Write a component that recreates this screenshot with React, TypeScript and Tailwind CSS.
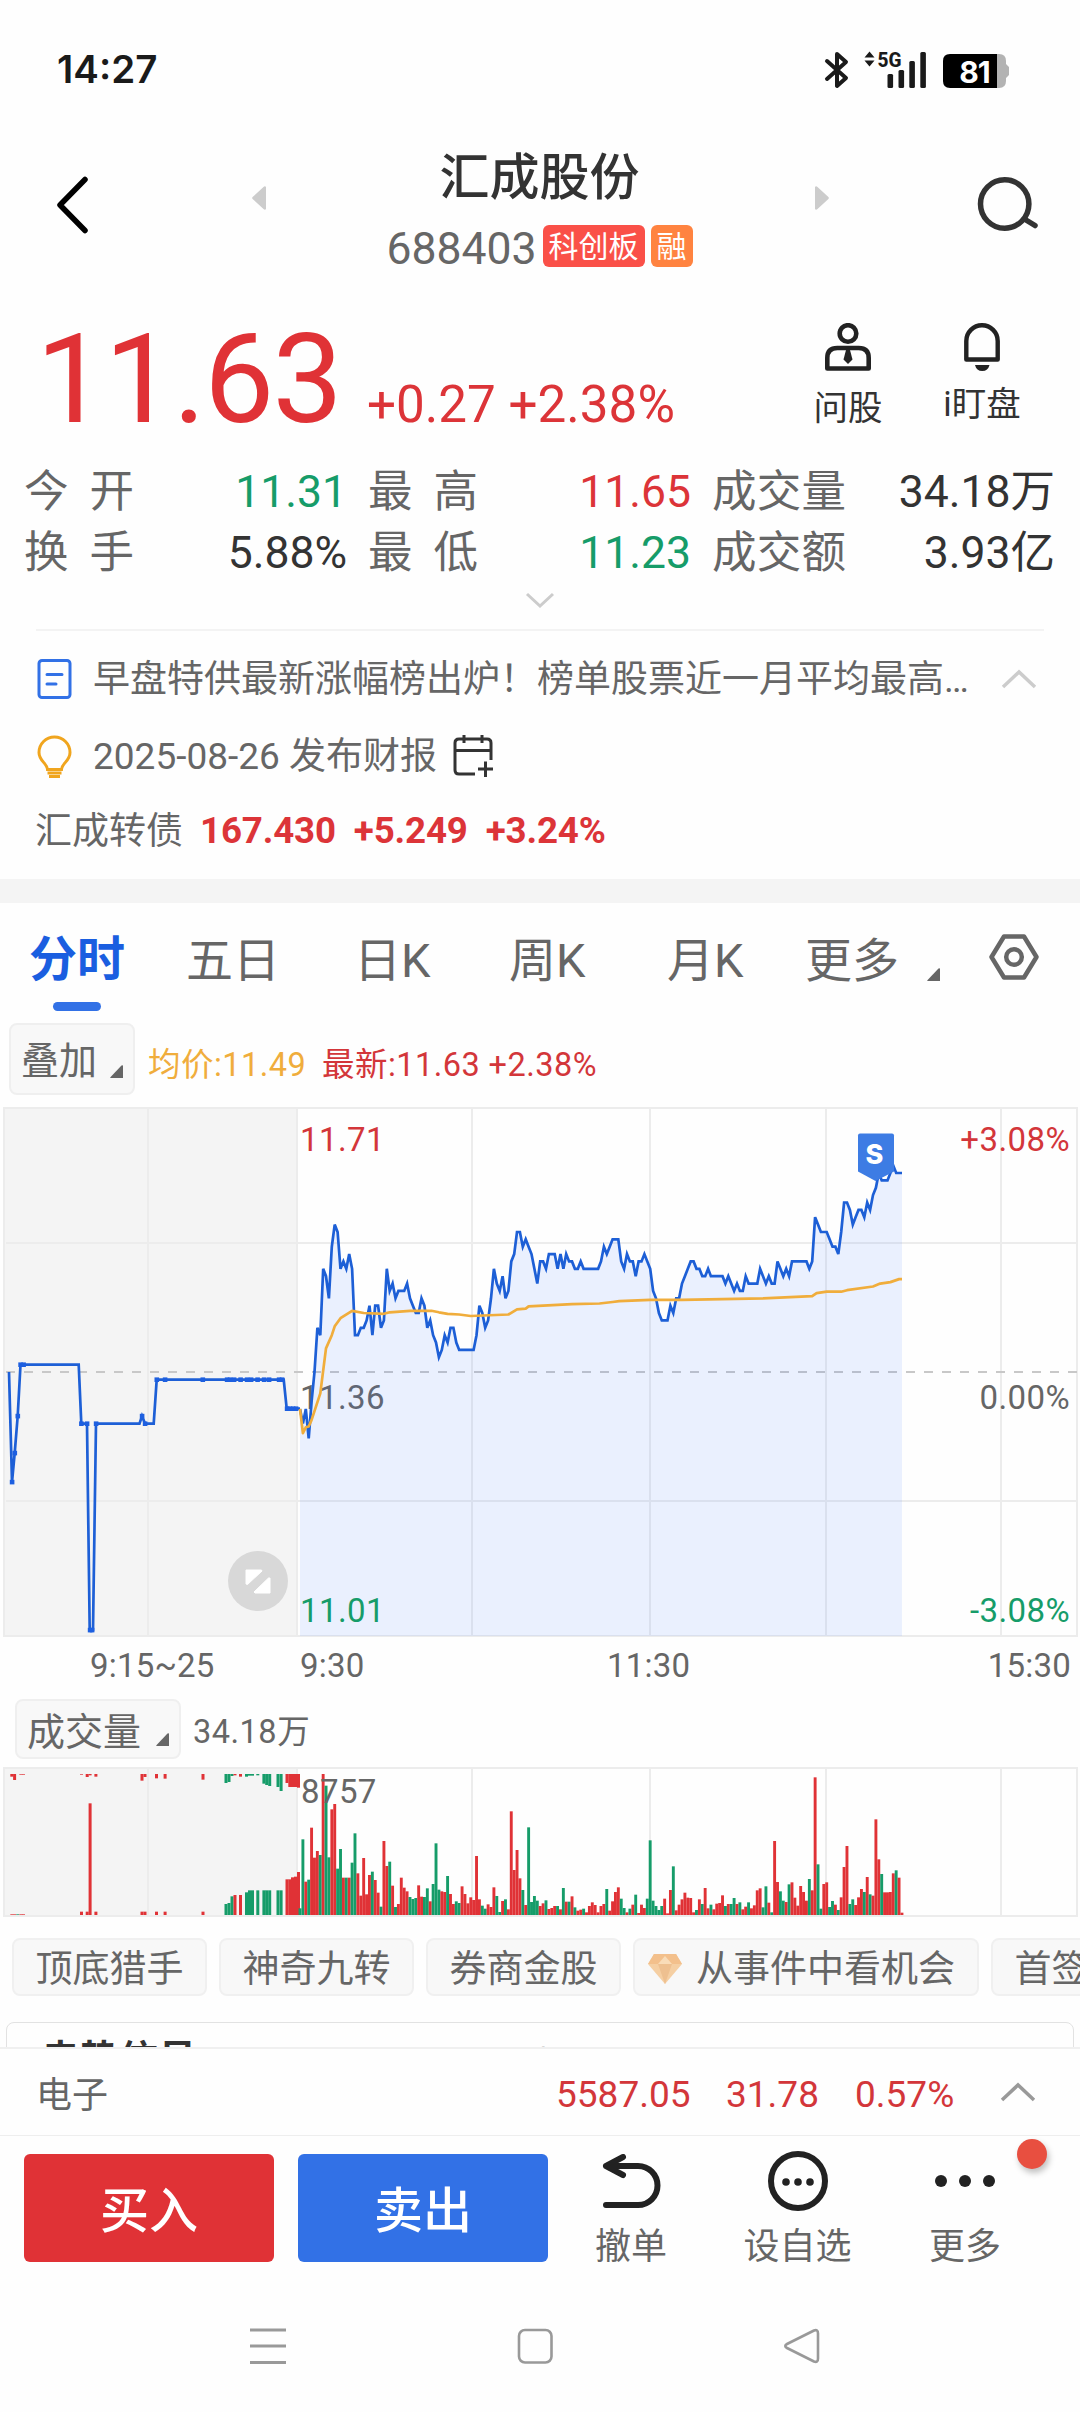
import clsx from "clsx";

const MINUTE = 2.894;
const TICK = 7.37;
const OPEN_X = 300;
const RED = "#e03236";
const GREEN = "#169c69";

// price per minute, in cents above the previous close of 11.36
const prices = [
  -5, -7, -5, -9, -4, 0, 6, 5, 14, 13, 10, 17, 20, 19, 14, 15, 14, 16, 14, 5,
  5, 6, 6, 7, 9, 5, 9, 9, 6, 7, 14, 11, 12, 10, 11, 11, 11, 12, 10, 9,
  8, 8, 10, 9, 6, 7, 5, 4, 2, 3, 5, 4, 6, 6, 4, 3, 3, 3, 3, 3,
  3, 5, 9, 8, 6, 7, 10, 14, 12, 11, 13, 10, 11, 15, 16, 19, 19, 17, 18, 17,
  16, 14, 12, 15, 15, 14, 16, 16, 16, 14, 16, 14, 16, 15, 15, 14, 14, 15, 14, 14,
  14, 14, 14, 14, 15, 17, 16, 17, 18, 18, 18, 15, 14, 16, 15, 15, 13, 15, 15, 16,
  15, 14, 11, 10, 8, 7, 7, 7, 9, 8, 10, 10, 12, 13, 14, 15, 15, 14, 14, 13,
  13, 14, 13, 13, 13, 13, 13, 12, 13, 12, 11, 12, 11, 11, 13, 12, 12, 12, 12, 14,
  13, 12, 13, 12, 12, 15, 14, 13, 14, 13, 15, 15, 15, 15, 15, 15, 14, 15, 21, 20,
  19, 19, 19, 18, 17, 17, 16, 19, 23, 23, 22, 20, 21, 22, 22, 21, 23, 22, 24, 25,
  27, 26, 26, 26, 27, 28, 27, 27, 27,
];

// [minute, cents]
const average = [
  [0, -5], [1, -8.3], [2, -7.5], [3, -7.4], [4, -6.5], [7, -2.9], [9, 3.2], [11, 5],
  [12, 6.2], [14, 7.3], [18, 8.3], [22, 8], [29, 7.9], [31, 8.1], [38, 8.3], [45.4, 8.3],
  [48, 8.1], [51, 7.9], [55, 7.8], [59, 7.6], [72, 7.8], [75, 8.5], [78, 8.6], [79, 8.9],
  [94, 9.2], [103.5, 9.3], [108, 9.5], [110.3, 9.6], [121, 9.8], [132, 9.8], [160, 10],
  [177, 10.3], [178.5, 10.7], [182, 10.9], [187, 10.9], [189, 11.1], [198, 11.6],
  [200.5, 12], [204, 12.2], [207, 12.6], [208, 12.6],
];

// volume per minute, negative = falling minute
const volumes = [
  -20, -227, 100, -106, 262, 172, 192, -180, 423, -388, -173, 317, 333, -139, -198, 112, -112, 112, -157, -245,
  125, 58, 171, 62, 120, -130, 105, 67, -25, 222, 147, -160, 88, -24, 33, 112, 82, 71, -54, -48,
  -51, 89, 55, -54, -80, 41, -93, -215, -76, 71, 69, -117, 63, 33, -41, -36, 86, 63, 35, 53,
  45, 177, 47, -28, -19, 32, 24, 83, -57, -9, 42, -47, 17, 311, 135, 195, 110, -75, 30, -263,
  -39, -57, -43, 27, 35, -44, 18, 21, 27, -27, 17, -81, 40, -40, 56, -23, 13, 16, -19, 8,
  27, 38, 30, 8, 27, 33, -78, 13, 41, 69, 83, -49, -21, 8, -19, 31, -61, 6, 31, 21,
  -49, -224, -43, -27, -15, -27, 49, 5, 75, -146, 14, 31, 47, 67, 52, 51, 8, -15, 47, -33,
  81, 20, -31, 17, 34, 36, 59, -27, 33, -33, -51, 33, -38, 17, 25, -38, 20, 29, 74, 80,
  -23, -86, 37, -8, 222, 99, -71, -43, 39, -92, 98, 52, 28, 87, 69, 43, -108, 74, 413, -152,
  -19, 93, 98, -24, -42, 31, -15, 53, 144, 207, -33, -47, 30, 53, 78, -69, 114, -62, 58, 287,
  167, -123, 68, 68, 69, 125, -134, 112, 7,
];

// call auction: [x, unmatched, matched, rising]
const auction: [number, number, number, boolean][] = [
  [10.3, 8, 2, true], [13.1, 18, 2, true], [16.2, 0, 2, false], [19.3, 2, 2, true], [22, 2, 2, true],
  [80, 2, 10, true], [85.7, 9, 10, true], [88.6, 4, 335, true], [94.4, 8, 10, true],
  [140.5, 20, 10, true], [143.5, 9, 10, true], [155, 13, 10, true], [163.6, 14, 10, true],
  [201.5, 17, 10, true], [224.5, 27, 33, false], [227.5, 24, 36, false], [230.5, 6, 56, false],
  [233.5, 4, 60, true], [239, 8, 60, true], [245, 8, 68, false], [248, 5, 74, false],
  [251, 5, 74, false], [256.3, 4, 74, false], [262.4, 29, 74, false], [265.2, 33, 74, false],
  [268.2, 36, 74, false], [276.5, 39, 74, false], [279.6, 51, 74, false], [285.5, 27, 107, true],
  [288.3, 39, 107, true], [291, 39, 113, true], [294, 39, 115, true], [297, 41, 129, true],
];

const preMarket =
  "9,272 12,382 14.7,353 17.7,316 20.5,264.6 78.7,264.6 81.3,323.6 87,323.6 89.7,530 93,530 96,323.6 139.5,323.6 142,316 145,323.6 153.7,323.6 156.7,279.6 283.7,279.6 286.7,308.6 300,308.6";

const preMarketDots = [
  [12, 382], [14.7, 353], [17.7, 316], [20.5, 264.6], [23.5, 264.6], [81.3, 323.6], [87, 323.6],
  [90, 530], [92, 530], [96, 323.6], [142, 316], [145, 323.6], [156.7, 279.6], [165, 279.6],
  [202.7, 279.6], [227, 279.6], [230, 279.6], [234, 279.6], [240.5, 279.6], [247, 279.6],
  [251, 279.6], [257.5, 279.6], [264, 279.6], [269, 279.6], [279, 279.6], [282, 279.6],
  [287, 308.6], [290, 308.6], [293, 308.6], [296, 308.6],
];

const px = (minute: number) => OPEN_X + minute * MINUTE;
const py = (cents: number) => 272 - cents * TICK;
const priceLine = prices.map((c, i) => `${px(i).toFixed(1)},${py(c).toFixed(1)}`).join(" ");
const averageLine = average.map(([m, c]) => `${px(m).toFixed(1)},${py(c).toFixed(1)}`).join(" ");

const Corner = ({ className }: { className?: string }) => (
  <svg className={clsx("h-[13px] w-[13px] shrink-0", className)} viewBox="0 0 13 13" fill="#666">
    <path d="M13 1v12H1q-1.200 0-.4-1L11.500.6Q13-.5 13 1z" />
  </svg>
);

const StatusBar = () => (
  <div className="flex h-[140px] shrink-0 items-center pr-[70px] pl-[57px]">
    <span className="-mt-[2px] font-[Inter] text-[38.500px] leading-none font-semibold text-[#1a1a1a]">14:27</span>
    <svg className="ml-auto h-[40px] w-[190px]" viewBox="820 50 190 40">
      <path d="M827 61l19 17-9 8V54l9 8-19 17" fill="none" stroke="#1a1a1a" strokeWidth="4" strokeLinecap="round" strokeLinejoin="round" />
      <path d="M869.500 51.500l5 6h-10zM869.500 66.500l5-6h-10z" fill="#1a1a1a" />
      <text x="877.500" y="67" fontFamily="Roboto" fontSize="20.500" fontWeight="800" fill="#1a1a1a" textLength="24" lengthAdjust="spacingAndGlyphs">
        5G
      </text>
      <g fill="#1a1a1a">
        <rect x="887.500" y="74" width="5.600" height="14" rx="1.500" />
        <rect x="898.500" y="70" width="5.600" height="18" rx="1.500" />
        <rect x="909.300" y="61" width="5.600" height="27" rx="1.500" />
        <rect x="920.300" y="52" width="5.600" height="36" rx="1.500" />
      </g>
      <path d="M990 54h9q7 0 7 7v3l3 3v8l-3 3v3q0 7-7 7h-9z" fill="#b3b3b3" />
      <path d="M950 54h47v34h-47q-7 0-7-7V61q0-7 7-7z" fill="#000" />
      <text x="974.500" y="82.500" textAnchor="middle" fontFamily="Inter" fontSize="30" fontWeight="700" fill="#fff" letterSpacing="-1">
        81
      </text>
    </svg>
  </div>
);

const Header = () => (
  <div className="flex h-[150px] shrink-0 items-start pl-[57px]">
    <svg className="mt-[36px] h-[58px] w-[32px]" viewBox="0 0 32 58" fill="none" stroke="#000" strokeWidth="5.500" strokeLinecap="round" strokeLinejoin="round">
      <path d="M28 3.500L3 29l25 25.500" />
    </svg>
    <svg className="mt-[46px] ml-[163px] h-[24px] w-[14px]" viewBox="0 0 14 24" fill="#ccc">
      <path d="M14 1v22q-1 1.500-2.500 0L.6 13q-.9-1 0-2L11.500 1Q13-.5 14 1z" />
    </svg>
    <div className="flex w-[547px] flex-col items-center pt-[7px]">
      <h1 className="h-[78px] pt-[3px] text-[50px] leading-[56px] font-medium text-[#333]">汇成股份</h1>
      <div className="flex h-[42px] items-center">
        <span className="mr-[6px] pt-[6px] text-[44.500px] leading-none text-[#666]">688403</span>
        <span className="mr-[6px] flex h-[42px] w-[102px] items-center justify-center rounded-[6px] bg-[#fa5048] pt-[2px] text-[30px] leading-none text-white">科创板</span>
        <span className="flex h-[42px] w-[42px] items-center justify-center rounded-[6px] bg-[#ff8340] pt-[2px] text-[30px] leading-none text-white">融</span>
      </div>
    </div>
    <svg className="mt-[46px] ml-[2px] h-[24px] w-[14px]" viewBox="0 0 14 24" fill="#ccc">
      <path d="M0 1v22q1 1.500 2.500 0L13.400 13q.9-1 0-2L2.500 1Q1-.5 0 1z" />
    </svg>
    <svg className="mt-[36px] ml-[148px] h-[60px] w-[64px]" viewBox="0 0 64 60" fill="none" stroke="#333" strokeWidth="5.500">
      <circle cx="27.700" cy="28" r="24.200" />
      <path d="M49 44l9 5.500" strokeLinecap="round" />
    </svg>
  </div>
);

const Quote = () => (
  <div className="flex h-[170px] shrink-0 pl-[36px]">
    <span className="w-[331px] pt-[27px] text-[125px] leading-none tracking-[-1.800px] text-[#e03236]">11.63</span>
    <span className="pt-[89px] text-[51.200px] leading-none text-[#dc3438]">+0.27 +2.38%</span>
    <div className="ml-auto flex w-[278px] pt-[33px] text-[34.500px] leading-none text-[#333]">
      <div className="flex w-[92px] flex-col items-center">
        <svg className="h-[48px] w-[46px]" viewBox="0 0 46 48" fill="none" stroke="#222" strokeWidth="4.600">
          <circle cx="23" cy="10.500" r="8.300" />
          <path d="M2.300 45.500V35q0-10 10-10h21.400q10 0 10 10v10.500z" strokeLinejoin="round" />
          <path d="M21 27h4l2.500 9.500-4.500 4.500-4.500-4.500z" fill="#222" stroke="none" />
        </svg>
        <span className="mt-[20px]">问股</span>
      </div>
      <div className="ml-[42px] flex w-[92px] flex-col items-center">
        <svg className="h-[48px] w-[36px]" viewBox="0 0 36 48" fill="none" stroke="#222" strokeWidth="4.400">
          <path d="M2.300 36.500V18a15.700 15.700 0 0131.400 0v18.500z" strokeLinejoin="round" />
          <path d="M11 42h14.500q-1.500 6-7.250 6T11 42z" fill="#222" stroke="none" />
        </svg>
        <span className="mt-[16px]">i盯盘</span>
      </div>
    </div>
  </div>
);

const Label = ({ text }: { text: string }) => (
  <span className={clsx("flex shrink-0 justify-between text-[44.500px] text-[#666]", text.length === 2 ? "w-[110px]" : "w-[134px]")}>
    {text.split("").map((c) => (
      <span key={c}>{c}</span>
    ))}
  </span>
);

const Stats = () => (
  <div className="flex h-[169px] shrink-0 flex-col items-center pt-[2px]">
    {[
      [["今开", "11.31", "text-[#169c69]"], ["最高", "11.65", "text-[#dc3438]"], ["成交量", "34.18万", "text-[#333]"]],
      [["换手", "5.88%", "text-[#333]"], ["最低", "11.23", "text-[#169c69]"], ["成交额", "3.93亿", "text-[#333]"]],
    ].map((row) => (
      <div key={row[0][0]} className="flex h-[61px] w-full items-center pl-[24px] text-[45px] leading-none">
        {row.map(([label, value, color], i) => (
          <div key={label} className={clsx("flex justify-between", i === 0 && "w-[323px]", i === 1 && "ml-[21px] w-[323px]", i === 2 && "ml-[21px] w-[343px]")}>
            <Label text={label} />
            <span className={clsx(color, "text-[44.500px]")}>{value}</span>
          </div>
        ))}
      </div>
    ))}
    <svg className="mt-[7px] h-[18px] w-[30px]" viewBox="0 0 30 18" fill="none" stroke="#ccc" strokeWidth="3">
      <path d="M2 3l13 12L28 3" />
    </svg>
  </div>
);

const News = () => (
  <div className="mx-[36px] flex h-[250px] shrink-0 flex-col border-t-2 border-[#f3f3f3] text-[37px] leading-none text-[#666]">
    <div className="mt-[26px] flex h-[44px] items-center">
      <svg className="h-[40px] w-[36px]" viewBox="0 0 36 40" fill="none" stroke="#3271e6" strokeWidth="3">
        <rect x="3" y="1.500" width="31" height="37" rx="3" />
        <path d="M11 15.500h15M11 25h9" strokeLinecap="round" />
      </svg>
      <span className="ml-[21px] w-[877px] whitespace-nowrap">早盘特供最新涨幅榜出炉！榜单股票近一月平均最高…</span>
      <svg className="ml-[31px] h-[20px] w-[36px]" viewBox="0 0 36 20" fill="none" stroke="#ccc" strokeWidth="3.500">
        <path d="M2 18L18 3l16 15" />
      </svg>
    </div>
    <div className="mt-[32px] flex h-[46px] items-center">
      <svg className="h-[43px] w-[36px]" viewBox="0 0 36 43" fill="none" stroke="#f0a51e" strokeWidth="3">
        <path d="M11.500 34.500C11 28 3 26 3 17.500a15.500 15.500 0 0131 0C34 26 26 28 25.500 34.500z" />
        <path d="M11.500 38h14M13 41.500h11" />
      </svg>
      <span className="ml-[21px]">2025-08-26 发布财报</span>
      <svg className="ml-[15px] h-[42px] w-[42px]" viewBox="0 0 42 42" fill="none" stroke="#333" strokeWidth="3">
        <path d="M23 39H7q-4 0-4-4V8q0-4 4-4h28q4 0 4 4v17M3 15.500h36M12 0v8M30 0v8M33.500 26.500V42M26 34h15" />
      </svg>
    </div>
    <div className="mt-[30px] flex h-[44px] items-center whitespace-pre">
      <span className="-ml-[1px]">汇成转债</span>
      <span className="ml-[17px] text-[36.700px] font-bold tracking-[-0.150px] text-[#dc3438]">167.430  +5.249  +3.24%</span>
    </div>
  </div>
);

const tabs = [
  ["五日", "ml-[61px] w-[96px]"],
  ["日K", "ml-[72px] w-[79px]"],
  ["周K", "ml-[76px] w-[79px]"],
  ["月K", "ml-[79px] w-[79px]"],
  ["更多", "ml-[59px] w-[94px]"],
];

const Tabs = () => (
  <div className="flex h-[117px] shrink-0 text-[47px] leading-none text-[#666]">
    <div className="ml-[29px] flex w-[96px] flex-col items-center pt-[33px]">
      <span className="text-[48px] font-bold text-[#1a5ee0]">分时</span>
      <div className="mt-[18px] h-[9px] w-[48px] rounded-full bg-[#3271e6]" />
    </div>
    {tabs.map(([name, place]) => (
      <span key={name} className={clsx("pt-[34px] whitespace-nowrap", place)}>
        {name}
      </span>
    ))}
    <Corner className="mt-[65px] ml-[28px]" />
    <svg className="mt-[31px] ml-[49px] h-[46px] w-[50px]" viewBox="0 0 50 46" fill="none" stroke="#666" strokeWidth="4.500">
      <path d="M15 2.500h20L47.500 23 35 43.500H15L2.500 23z" strokeLinejoin="round" />
      <circle cx="25" cy="23" r="7.800" />
    </svg>
  </div>
);

const Legend = () => (
  <div className="flex h-[80px] shrink-0 items-start pt-[3px] pl-[9px] text-[32.500px] leading-none tracking-[0.450px] whitespace-nowrap">
    <button className="flex h-[72px] w-[126px] items-center rounded-[8px] border-2 border-[#efefef] bg-[#f8f8f8] pt-[4px] pl-[10px] text-[38px] tracking-normal text-[#666]">
      叠加
      <Corner className="mt-[20px] ml-[13px]" />
    </button>
    <span className="mt-[26px] ml-[13px] w-[174px] text-[#f0ad3c]">均价:11.49</span>
    <span className="mt-[26px] text-[#d3363a]">最新:11.63 +2.38%</span>
  </div>
);

const Grid = ({ bottom }: { bottom: number }) => (
  <>
    <rect x="3" y="8" width="294" height={bottom - 8} fill="#f4f4f4" />
    <path d={`M4 8H1077V${bottom}H4zM148 8V${bottom}M297 8V${bottom}M472 8V${bottom}M650 8V${bottom}M826 8V${bottom}M1001 8V${bottom}`} fill="none" stroke="#ececec" strokeWidth="2" />
  </>
);

const PriceChart = () => (
  <svg className="h-[540px] w-[1080px] shrink-0" viewBox="0 0 1080 540" fontSize="33" fontFamily="Roboto" letterSpacing="0.400">
    <Grid bottom={536} />
    <path d="M6 143H1077M6 401H1077" stroke="#ececec" strokeWidth="2" />
    <path d="M6 272H1077" stroke="#c8c8c8" strokeWidth="2" strokeDasharray="9 9" />
    <g fill="#666">
      <text x="300" y="309">11.36</text>
      <text x="1070" y="309" textAnchor="end">0.00%</text>
    </g>
    <polygon points={`300,536 ${priceLine} ${px(208)},536`} fill="#3b78ff" fillOpacity="0.100" />
    <g fill="none" stroke="#1d5fd6" strokeWidth="2.700">
      <polyline points={preMarket} />
      <polyline points={priceLine} />
    </g>
    {preMarketDots.map(([x, y]) => (
      <rect key={`${x}-${y}`} x={x - 2.2} y={y - 2.200} width="4.600" height="4.600" fill="#1d5fe0" />
    ))}
    <polyline points={averageLine} fill="none" stroke="#f0ad3c" strokeWidth="2.700" strokeLinejoin="round" />
    <g fill="#d3363a">
      <text x="300" y="51">11.71</text>
      <text x="1070" y="51" textAnchor="end">+3.08%</text>
    </g>
    <g fill="#169c69">
      <text x="300" y="522">11.01</text>
      <text x="1070" y="522" textAnchor="end">-3.08%</text>
    </g>
    <path d="M860 33.500h32q2 0 2 2v36L875.500 81 858 71.500v-36q0-2 2-2z" fill="#3d7ce4" />
    <text x="874.500" y="64" textAnchor="middle" fontFamily="Inter" fontSize="27" fontWeight="800" fill="#fff">
      S
    </text>
    <circle cx="258" cy="481" r="30" fill="#d8d8d8" />
    <path d="M246 470h15.500l.5 1-14.500 13.500-1.500-.5zM270 478v15h-15l-1-1 14.500-14z" fill="#fff" stroke="#fff" strokeLinejoin="round" />
  </svg>
);

const Volume = () => (
  <>
    <div className="flex h-[70px] shrink-0 items-start pt-[9px] pl-[15px] text-[32.500px] leading-none text-[#666]">
      <button className="flex h-[60px] w-[166px] items-center rounded-[8px] border-2 border-[#efefef] bg-[#f8f8f8] pt-[5px] pl-[10px] text-[38px]">
        成交量
        <Corner className="mt-[15px] ml-[15px]" />
      </button>
      <span className="mt-[17px] ml-[12px] tracking-[0.500px]">34.18万</span>
    </div>
    <svg className="h-[160px] w-[1080px] shrink-0" viewBox="0 0 1080 160">
      <Grid bottom={156} />
      {auction.map(([x, unmatched, matched, up]) => (
        <g key={x} fill={up ? RED : GREEN}>
          <rect x={x} y="14" width="3" height={unmatched / 3} />
          <rect x={x} y={155 - matched / 3} width="3" height={matched / 3} />
        </g>
      ))}
      {volumes.map((v, i) => (
        <rect key={i} x={px(i) - 1.45} y={155 - Math.abs(v) / 3} width="2.900" height={Math.abs(v) / 3} fill={v > 0 ? RED : GREEN} />
      ))}
      <text x="301" y="43" fontFamily="Roboto" fontSize="33" letterSpacing="0.400" fill="#666">
        8757
      </text>
    </svg>
  </>
);

const Gem = () => (
  <svg className="mr-[14px] h-[30px] w-[34px]" viewBox="0 0 34 30">
    <path d="M6 0h22l6 10-17 20L0 10z" fill="#f5cfa3" />
    <path d="M6 0h22l6 10H0z" fill="#f3c08c" />
    <path d="M10 10l7-8 7 8z" fill="#f9dcb8" />
    <path d="M10 10h14l-7 20z" fill="#eec090" />
  </svg>
);

const Chips = () => (
  <div className="flex h-[90px] shrink-0 gap-[12px] overflow-hidden pt-[18px] pl-[12px] text-[37px] leading-none whitespace-nowrap text-[#666]">
    {["顶底猎手", "神奇九转", "券商金股", "从事件中看机会", "首签数据"].map((name) => {
      const featured = name.length > 4;
      return (
        <button
          key={name}
          className={clsx(
            "flex h-[58px] shrink-0 items-center rounded-[8px] border-2 border-[#f0f0f0] bg-[#f8f8f8] pt-[4px]",
            featured ? "w-[346px] pl-[13px]" : "w-[195px] justify-center",
          )}
        >
          {featured && <Gem />}
          {name}
        </button>
      );
    })}
  </div>
);

const SignalCard = () => (
  <div className="h-[37px] shrink-0 overflow-hidden px-[6px] pt-[12px]">
    <div className="flex h-[120px] items-start rounded-[8px] border border-[#e2e2e2] pt-[18px] pl-[34px] leading-none whitespace-nowrap">
      <span className="text-[39px] font-bold text-[#333]">走势信号</span>
      <span className="mt-[6px] ml-[120px] text-[34px] text-[#666]">已出现主力持续净流入信号</span>
    </div>
  </div>
);

const Footer = () => (
  <>
    <div className="flex h-[88px] shrink-0 items-center border-t-2 border-[#f0f0f0] pl-[36px] text-[37px] leading-none text-[#d3363a]">
      <span className="w-[520px] pt-[7px] text-[36px] text-[#666]">电子</span>
      <span className="w-[170px] pt-[5px]">5587.05</span>
      <span className="w-[129px] pt-[5px]">31.78</span>
      <span className="w-[145px] pt-[5px]">0.57%</span>
      <svg className="h-[20px] w-[36px]" viewBox="0 0 36 20" fill="none" stroke="#999" strokeWidth="3.500">
        <path d="M2 18L18 3l16 15" />
      </svg>
    </div>
    <div className="flex h-[149px] shrink-0 border-t border-[#eee] pt-[18px] pl-[24px] text-[36px] leading-none text-[#666]">
      <button className="h-[108px] w-[250px] rounded-[6px] bg-[#e03236] pt-[6px] text-[49px] font-medium text-white">买入</button>
      <button className="ml-[24px] h-[108px] w-[250px] rounded-[6px] bg-[#3271e6] pt-[6px] text-[49px] font-medium text-white">卖出</button>
      <div className="flex w-[166px] flex-col items-center">
        <svg className="h-[54px] w-[60px]" viewBox="0 0 60 54" fill="none" stroke="#222" strokeWidth="6" strokeLinecap="round" strokeLinejoin="round">
          <path d="M22 3L5 12l17 9M5 12h32a19.500 19.500 0 010 39H5" />
        </svg>
        <span className="mt-[21px]">撤单</span>
      </div>
      <div className="flex w-[167px] flex-col items-center">
        <svg className="-mt-[3px] h-[60px] w-[60px]" viewBox="0 0 60 60" fill="#222">
          <circle cx="30" cy="30" r="27" fill="none" stroke="#222" strokeWidth="6" />
          <circle cx="18" cy="31" r="3.800" />
          <circle cx="30" cy="31" r="3.800" />
          <circle cx="42" cy="31" r="3.800" />
        </svg>
        <span className="mt-[18px]">设自选</span>
      </div>
      <div className="relative flex w-[168px] flex-col items-center">
        <svg className="h-[54px] w-[60px]" viewBox="0 0 60 54" fill="#222">
          <circle cx="6" cy="27" r="6" />
          <circle cx="30" cy="27" r="6" />
          <circle cx="54" cy="27" r="6" />
        </svg>
        <span className="mt-[21px]">更多</span>
        <div className="absolute -top-[15px] right-[2px] h-[30px] w-[30px] rounded-full bg-[#e84f40] shadow-[2px_4px_6px_rgba(0,0,0,0.25)]" />
      </div>
    </div>
    <div className="flex h-[124px] shrink-0 items-center gap-[229px] pl-[249px]">
      <svg className="h-[38px] w-[38px]" viewBox="0 0 38 38" stroke="#999" strokeWidth="3">
        <path d="M1 3h36M1 19h36M1 35.500h36" />
      </svg>
      <svg className="h-[38px] w-[38px]" viewBox="0 0 38 38" fill="none" stroke="#999" strokeWidth="2.600">
        <rect x="3" y="3" width="32.500" height="32.500" rx="6" />
      </svg>
      <svg className="h-[38px] w-[38px]" viewBox="0 0 38 38" fill="none" stroke="#999" strokeWidth="2.600">
        <path d="M31 3.500q4-1.500 4 3v25q0 4.500-4 3L4 21q-3.500-2 0-4z" strokeLinejoin="round" />
      </svg>
    </div>
  </>
);

export default function App() {
  return (
    <div className="flex h-[2412px] w-[1080px] flex-col overflow-hidden bg-[#fefefe] font-[Roboto,'Noto_Sans_CJK_SC',sans-serif]">
      <StatusBar />
      <Header />
      <Quote />
      <Stats />
      <News />
      <div className="h-[24px] shrink-0 bg-[#f4f4f4]" />
      <Tabs />
      <Legend />
      <PriceChart />
      <div className="flex h-[50px] shrink-0 items-center text-[33px] leading-none tracking-[0.200px] text-[#666]">
        <span className="ml-[90px] w-[210px]">9:15~25</span>
        <span className="w-[307px]">9:30</span>
        <span>11:30</span>
        <span className="mr-[9px] ml-auto">15:30</span>
      </div>
      <Volume />
      <Chips />
      <SignalCard />
      <Footer />
    </div>
  );
}
